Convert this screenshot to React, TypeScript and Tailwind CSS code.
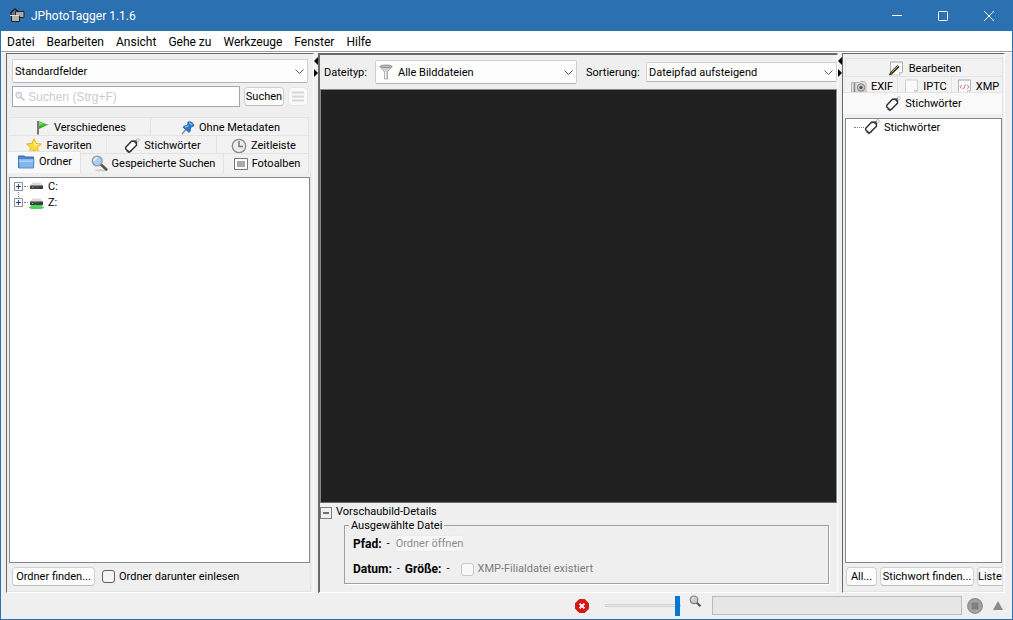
import type { ReactNode } from "react";

/* ---------- Icons ---------- */

const AppIcon = () => (
  <svg width="16" height="16" viewBox="0 0 16 16" aria-hidden="true">
    <path d="M2 7V4.500L6 1l4 3" fill="#777" stroke="#111" strokeWidth="1.200" />
    <path d="M6.500 3.500h8.500v6H6.500z" fill="#aaa" stroke="#222" strokeWidth="1" />
    <path d="M2.500 7.500h8v6h-8z" fill="#b4b4ae" stroke="#222" strokeWidth="1" />
    <path d="M1 7.500h9.500" stroke="#ddd" />
  </svg>
);

const Chevron = () => (
  <svg width="9" height="5" viewBox="0 0 9 5" aria-hidden="true">
    <path d="M.5.5l4 4 4-4" fill="none" stroke="#555" strokeWidth="1" />
  </svg>
);

const SmallSearch = () => (
  <svg width="11" height="11" viewBox="0 0 11 11" aria-hidden="true">
    <circle cx="4" cy="4" r="3" fill="#e6eef8" stroke="#c2c9d4" strokeWidth="1.3" />
    <path d="M6.4 6.4l3.6 3.4" stroke="#cfcfcf" strokeWidth="2" />
  </svg>
);

const FlagIcon = () => (
  <svg width="14" height="15" viewBox="0 0 14 15" aria-hidden="true">
    <path d="M2 1v13.500" stroke="#333" strokeWidth="1.300" />
    <path d="M3 1.500c3 .3 5 2.500 10 3.300C9 5.500 6 8.300 3 9z" fill="#35b02b" />
    <path d="M3 2c2 .3 3 1.200 5 2L3 6z" fill="#7ed36b" />
  </svg>
);

const PinIcon = () => (
  <svg width="14" height="14" viewBox="0 0 14 14" aria-hidden="true">
    <path d="M1 13l4-4.500" stroke="#8a9099" strokeWidth="1.400" />
    <path d="M2 6.200c1-1.600 2.600-1.600 4-1.800l.8-1.800C6.300 1.500 7 .4 8.600.7c1.800.2 3.700 1.600 4.200 3.100.2 1.400-.8 1.900-1.800 1.800L9.500 7.200c.2 1.600 0 3-1.400 4.300z" fill="#2b78c9" stroke="#1d569c" strokeWidth=".7" />
    <path d="M8.200 1.800l3 2.200M4 6.200c1.500-.4 2.600-.7 3.500-1.800" stroke="#8fc3f3" strokeWidth="1.200" fill="none" />
  </svg>
);

const StarIcon = () => (
  <svg width="16" height="16" viewBox="0 0 16 16" aria-hidden="true">
    <path d="M8 .7l2.200 4.700 5.200.6-3.900 3.500 1.100 5.200L8 12.100l-4.600 2.600 1.100-5.200L.6 6l5.200-.6z" fill="#fddc35" stroke="#dca51b" strokeWidth=".8" />
    <path d="M8 2.400l1.500 3.700 3.700.5L8 8.300z" fill="#fff3a0" />
  </svg>
);

const TagIcon = () => (
  <svg width="16" height="16" viewBox="0 0 16 16" aria-hidden="true">
    <path d="M2 9L7.500 3.300 12.400 3 12.500 7.200l-5.800 5.900c-.8.8-1.800.8-2.600 0L2 11.200c-.6-.7-.6-1.500 0-2.200z" fill="#fff" stroke="#2b2b2b" strokeWidth="1.400" />
    <path d="M2.500 12.500l2.300 2 2.500-1.500" fill="none" stroke="#444" strokeWidth="1.300" />
    <path d="M9 3.300l3.400-.3.100 3.500z" fill="#444" />
    <circle cx="13.700" cy="2.200" r="1.600" fill="none" stroke="#b5b5b5" strokeWidth=".9" />
  </svg>
);

const ClockIcon = () => (
  <svg width="16" height="16" viewBox="0 0 16 16" aria-hidden="true">
    <circle cx="8" cy="8" r="6.700" fill="#ededed" stroke="#8a8a8a" strokeWidth="1.300" />
    <path d="M8 3v5.500h4" fill="none" stroke="#777" strokeWidth="1.500" />
  </svg>
);

const FolderIcon = () => (
  <svg width="17" height="14" viewBox="0 0 17 14" aria-hidden="true">
    <path d="M.5 12.500V1h6l1 1h8v10.500z" fill="#5089cf" stroke="#3569ad" />
    <path d="M.5 4h15.500l-.5 9H1z" fill="#83b5ec" stroke="#457fc7" strokeWidth=".8" />
    <path d="M1 5h14.500M1.500 6.500h13.500" stroke="#b4d6f8" strokeWidth=".9" />
  </svg>
);

const LensIcon = () => (
  <svg width="17" height="17" viewBox="0 0 17 17" aria-hidden="true">
    <ellipse cx="10" cy="15.300" rx="6" ry="1.200" fill="#d2d2d2" />
    <path d="M10 9.500l5.300 5" stroke="#555" strokeWidth="2.600" strokeLinecap="round" />
    <circle cx="6.200" cy="6" r="4.900" fill="#a9cdf2" stroke="#96999e" strokeWidth="1.400" />
    <path d="M3 6c.3-2 1.600-3 3.300-3.200" stroke="#f2f9ff" strokeWidth="1.500" fill="none" />
  </svg>
);

const AlbumIcon = () => (
  <svg width="14" height="12" viewBox="0 0 14 12" aria-hidden="true">
    <path d="M.5.5h13v11H.5z" fill="#fbfbfb" stroke="#777" />
    <path d="M3 3h8v6H3z" fill="#a8a8a8" />
  </svg>
);

const DriveIcon = ({ network = false }: { network?: boolean }) => (
  <svg width="15" height="14" viewBox="0 0 15 14" aria-hidden="true">
    <path d="M3.500 3.500h8l2.500 3.500H1z" fill="#dadada" />
    <path d="M1 6.500h13V10H1z" fill="#3c3c3c" />
    <path d="M2 8h8" stroke="#6c6c6c" strokeWidth=".7" />
    <path d="M3 8h1v1H3z" fill="#55e15a" />
    {network && (
      <>
        <path d="M0 12.500h15" stroke="#9a9a9a" />
        <path d="M1.500 10h12v4h-12z" fill="#48d862" />
      </>
    )}
  </svg>
);

const PlusBox = ({ first }: { first: boolean }) => (
  <svg width="9" height="16" viewBox="0 0 9 16" aria-hidden="true">
    <path d="M.5 4.500h8v8h-8z" fill="#f7f7f7" stroke="#919191" />
    <path d="M2 8.500h5M4.500 6v5" stroke="#2a4a9c" />
    <path d={first ? "M4 14h1v1h-1z" : "M4 0h1v1h-1zM4 2h1v1h-1z"} fill="#808080" />
  </svg>
);

const FunnelIcon = () => (
  <svg width="14" height="16" viewBox="0 0 14 16" aria-hidden="true">
    <path d="M1 2.500l4.500 5.500v7h3V8L13 2.500z" fill="#d3d3d3" stroke="#999" strokeWidth=".8" />
    <path d="M6.500 8v6.500" stroke="#f8f8f8" strokeWidth="1.200" />
    <ellipse cx="7" cy="2.300" rx="6" ry="1.300" fill="#bbb" stroke="#777" strokeWidth=".7" />
  </svg>
);

const PageShape = () => (
  <>
    <path d="M1.500 1h12v10.500L10.500 14h-9z" fill="#fafafa" stroke="#d0d0d0" />
    <path d="M10.500 14v-2.500h3" fill="none" stroke="#bbb" strokeWidth=".8" />
  </>
);

const EditIcon = () => (
  <svg width="16" height="15" viewBox="0 0 16 15" aria-hidden="true">
    <PageShape />
    <path d="M1.500 12V1h12v10" fill="none" stroke="#b0b0b0" />
    <path d="M2 12.500L9.500 5" stroke="#3a3220" strokeWidth="2.800" />
    <path d="M2.500 11.500L9 5" stroke="#c9ad63" strokeWidth="1" />
    <path d="M0 14.500l1-3 2 2z" fill="#222" />
  </svg>
);

const PageIcon = () => (
  <svg width="15" height="15" viewBox="0 0 15 15" aria-hidden="true">
    <PageShape />
  </svg>
);

const XmlIcon = () => (
  <svg width="15" height="15" viewBox="0 0 15 15" aria-hidden="true">
    <PageShape />
    <path d="M1.500 12V1h12v10.500" fill="none" stroke="#b5b5b5" />
    <path d="M4.800 6L3 7.800 4.800 9.600M10.200 6L12 7.800 10.200 9.600M8.400 5.500L6.600 10" fill="none" stroke="#e0527a" strokeWidth=".9" />
  </svg>
);

const CameraIcon = () => (
  <svg width="16" height="12" viewBox="0 0 16 12" aria-hidden="true">
    <path d="M.5 1.500h8l1-1h4l1.500 1.500v9H.5z" fill="#dedede" stroke="#b5b5b5" />
    <path d="M3.500 2v9" stroke="#888" strokeWidth="1.500" />
    <circle cx="10" cy="6.500" r="3.700" fill="#ccc" stroke="#808080" />
    <circle cx="10" cy="6.500" r="1.700" fill="#555" />
  </svg>
);

const ErrorIcon = () => (
  <svg width="14" height="14" viewBox="0 0 14 14" aria-hidden="true">
    <path d="M4.200.5h5.600l3.700 3.700v5.600l-3.700 3.700H4.200L.5 9.800V4.200z" fill="#dc1414" stroke="#b80d0d" strokeWidth=".8" />
    <path d="M4.600 4.600l4.800 4.800M9.400 4.600L4.600 9.400" stroke="#fff" strokeWidth="2" />
  </svg>
);

const GreyLens = () => (
  <svg width="13" height="13" viewBox="0 0 13 13" aria-hidden="true">
    <path d="M7.500 7.500l4 3.800" stroke="#555" strokeWidth="2.200" />
    <circle cx="5" cy="4.800" r="3.800" fill="#ccc" stroke="#808080" strokeWidth="1.200" />
    <path d="M3 4.500C3.200 3.300 4 2.800 5 2.700" fill="none" stroke="#fff" />
  </svg>
);

const StopIcon = () => (
  <svg width="16" height="16" viewBox="0 0 16 16" aria-hidden="true">
    <circle cx="8" cy="8" r="7.300" fill="#a3a3a3" stroke="#8b8b8b" strokeWidth="1.200" />
    <path d="M5 5h6v6H5z" fill="#828282" stroke="#767676" strokeWidth=".6" />
  </svg>
);

/* ---------- Building blocks ---------- */

const Select = ({ label, value, icon, className }: { label: string; value: string; icon?: ReactNode; className: string }) => (
  <span className={`grid items-center ${className}`}>
    <select
      aria-label={label}
      className={`col-start-1 row-start-1 h-full w-full appearance-none rounded-[2px] border border-[#d0d0d0] border-b-[#b4b4b4] bg-[#fdfdfd] pt-px pr-5 ${icon ? "pl-[22px]" : "pl-[2px]"}`}
    >
      <option>{value}</option>
    </select>
    {icon && <span className="pointer-events-none col-start-1 row-start-1 justify-self-start pl-1">{icon}</span>}
    <span className="pointer-events-none col-start-1 row-start-1 justify-self-end pr-1">
      <Chevron />
    </span>
  </span>
);

const PushButton = ({ children, className = "" }: { children: ReactNode; className?: string }) => (
  <button
    type="button"
    className={`flex h-[19px] shrink-0 items-center justify-center rounded-[4px] border border-[#d0d0d0] border-b-[#bcbcbc] bg-[#fdfdfd] whitespace-nowrap ${className}`}
  >
    {children}
  </button>
);

const Tab = ({ icon, label, className = "", selected = false }: { icon: ReactNode; label: string; className?: string; selected?: boolean }) => (
  <button
    type="button"
    role="tab"
    aria-selected={selected}
    className={`flex items-center justify-center gap-1 overflow-hidden border-t border-r border-[#e3e3e3] pl-[2px] whitespace-nowrap ${selected ? "bg-[#f9f9f9]" : "bg-[#f2f2f2]"} ${className}`}
  >
    <span className="shrink-0">{icon}</span>
    <span className="pt-px">{label}</span>
  </button>
);

const Divider = () => (
  <div className="flex w-1 shrink-0 flex-col items-center gap-1 bg-[#f0f0f0] pt-1">
    <svg width="4" height="8" viewBox="0 0 4 8" aria-hidden="true">
      <path d="M4 0v8L0 4z" fill="#000" />
    </svg>
    <svg width="4" height="8" viewBox="0 0 4 8" aria-hidden="true">
      <path d="M0 0v8l4-4z" fill="#000" />
    </svg>
  </div>
);

const menus = ["Datei", "Bearbeiten", "Ansicht", "Gehe zu", "Werkzeuge", "Fenster", "Hilfe"];

/* ---------- Panels ---------- */

const TitleBar = () => (
  <header className="flex h-[31px] items-center bg-[#2b70b1] pl-2 text-white">
    <AppIcon />
    <h1 className="flex-1 pl-[6px] text-[12px]">JPhotoTagger 1.1.6</h1>
    <button type="button" aria-label="Minimieren" className="flex h-full w-[46px] items-center justify-center">
      <svg width="10" height="10" viewBox="0 0 10 10"><path d="M0 4.500h10" stroke="#fff" /></svg>
    </button>
    <button type="button" aria-label="Maximieren" className="flex h-full w-[46px] items-center justify-center">
      <svg width="10" height="10" viewBox="0 0 10 10"><rect x=".5" y=".5" width="9" height="9" rx=".8" fill="none" stroke="#fff" /></svg>
    </button>
    <button type="button" aria-label="Schließen" className="flex h-full w-[46px] items-center justify-center">
      <svg width="10" height="10" viewBox="0 0 10 10"><path d="M0 0l10 10M10 0L0 10" stroke="#fff" /></svg>
    </button>
  </header>
);

const TreeDrive = ({ name, network = false }: { name: string; network?: boolean }) => (
  <li className="flex h-4 items-center">
    <PlusBox first={!network} />
    <span className="ml-px w-1 border-t border-dotted border-[#808080]" />
    <span className="mr-1 ml-px"><DriveIcon network={network} /></span>
    <span className="pt-px">{name}</span>
  </li>
);

const LeftPanel = () => (
  <section className="flex w-[308px] shrink-0 flex-col border border-t-[#696969] border-r-white border-b-white border-l-[#696969]">
    <div className="flex flex-col gap-[3px] px-[5px] pt-[5px]">
      <Select label="Suchfelder" value="Standardfelder" className="h-6" />
      <div className="flex items-center">
        <label className="flex h-[21px] flex-1 items-center gap-[3px] border border-[#a3a6ab] bg-white px-[2px]">
          <SmallSearch />
          <input
            type="text"
            aria-label="Suchen"
            placeholder="Suchen (Strg+F)"
            className="w-full min-w-0 bg-transparent font-['Liberation_Sans',sans-serif] text-[12px] outline-none placeholder:text-[#cbcbcb]"
          />
        </label>
        <PushButton className="mx-1 w-10">Suchen</PushButton>
        <button type="button" aria-label="Menü" className="flex h-[19px] w-5 items-center justify-center rounded-[4px] border border-[#e6e6e6] bg-[#fafafa]">
          <svg width="12" height="11" viewBox="0 0 12 11"><path d="M0 1.500h12M0 5.500h12M0 9.500h12" stroke="#d6d6d6" strokeWidth="2" /></svg>
        </button>
      </div>
    </div>

    <div role="tablist" className="flex flex-col pt-[10px] pl-px">
      <div className="flex h-[18px] pr-1 pl-[2px]">
        <Tab className="w-[141px] pt-[2px]" icon={<FlagIcon />} label="Verschiedenes" />
        <Tab className="flex-1 pt-[2px]" icon={<PinIcon />} label="Ohne Metadaten" />
      </div>
      <div className="flex h-[18px] items-stretch pr-1 pl-[2px]">
        <Tab className="w-[97px] pt-[2px]" icon={<StarIcon />} label="Favoriten" />
        <Tab className="w-[110px] pt-[2px]" icon={<TagIcon />} label="Stichwörter" />
        <Tab className="flex-1 pt-[2px]" icon={<ClockIcon />} label="Zeitleiste" />
      </div>
      <div className="flex h-5 items-end pr-1">
        <Tab selected className="-mt-[2px] h-[22px] w-[73px] pb-[2px]" icon={<FolderIcon />} label="Ordner" />
        <Tab className="h-5 w-[143px]" icon={<LensIcon />} label="Gespeicherte Suchen" />
        <Tab className="h-5 flex-1" icon={<AlbumIcon />} label="Fotoalben" />
      </div>
    </div>

    <div className="mr-[2px] ml-[1px] flex flex-1 flex-col border-r border-b border-[#e3e3e3]">
      <ul className="mt-1 ml-px flex-1 border border-[#828790] bg-white pl-1">
        <TreeDrive name="C:" />
        <TreeDrive name="Z:" network />
      </ul>
      <div className="flex h-7 items-center pb-px pl-1">
        <PushButton className="w-[83px]">Ordner finden...</PushButton>
        <label className="ml-[7px] flex items-center gap-1">
          <input type="checkbox" className="size-[13px] appearance-none rounded-[3px] border border-[#606060] bg-[#f5f5f5]" />
          Ordner darunter einlesen
        </label>
      </div>
    </div>
  </section>
);

const CenterPanel = () => (
  <section className="flex min-w-0 flex-1 flex-col border-t-2 border-r border-b border-l-2 border-t-[#696969] border-r-white border-b-white border-l-[#696969]">
    <div className="flex h-[34px] items-center pl-1">
      <span className="w-[51px] pt-px whitespace-nowrap">Dateityp:</span>
      <Select label="Dateityp" value="Alle Bilddateien" icon={<FunnelIcon />} className="h-6 w-[202px]" />
      <span className="w-[69px] pt-px pl-[9px] whitespace-nowrap">Sortierung:</span>
      <Select label="Sortierung" value="Dateipfad aufsteigend" className="h-5 flex-1" />
    </div>
    <div className="flex-1 border border-[#828790] border-b-[#696969] bg-[#202020]" />
    <div className="flex h-[89px] flex-col">
      <div className="flex h-4 items-center gap-1 whitespace-nowrap">
        <button type="button" aria-label="Details ausblenden" className="mt-1 flex size-3 items-center justify-center border border-[#808080]">
          <svg width="6" height="2" viewBox="0 0 6 2"><path d="M0 1h6" stroke="#444" strokeWidth="1.500" /></svg>
        </button>
        <span className="pt-px">Vorschaubild-Details</span>
      </div>
      <fieldset className="mr-2 ml-6 border border-[#a0a0a0] px-2 pb-[2px] shadow-[1px_1px_0_#fff]">
        <legend className="-ml-1 h-3 px-[2px] leading-[13px]">Ausgewählte Datei</legend>
        <div className="flex h-6 items-center gap-[5px] pt-px">
          <b className="text-[12px]">Pfad:</b>
          <span>-</span>
          <button type="button" disabled className="h-[17px] rounded-[3px] border border-[#ebebeb] bg-[#f7f7f7] whitespace-nowrap text-[#8a8a8a]">
            Ordner öffnen
          </button>
        </div>
        <div className="flex h-[26px] items-center gap-[5px] pt-[2px] whitespace-nowrap">
          <b className="text-[12px]">Datum:</b>
          <span>-</span>
          <b className="text-[12px]">Größe:</b>
          <span>-</span>
          <label className="ml-[6px] flex items-center gap-1 text-[#7c7c7c]">
            <input type="checkbox" disabled className="size-[13px] appearance-none rounded-[3px] border border-[#c8c8c8] bg-[#f8f8f8]" />
            XMP-Filialdatei existiert
          </label>
        </div>
      </fieldset>
    </div>
  </section>
);

const RightPanel = () => (
  <section className="flex w-[163px] shrink-0 flex-col border border-t-[#696969] border-r-white border-b-white border-l-[#696969] pr-px">
    <div role="tablist" className="flex flex-col pt-1">
      <div className="flex h-[18px] pl-[2px]">
        <Tab className="flex-1 border-l pt-[2px]" icon={<EditIcon />} label="Bearbeiten" />
      </div>
      <div className="flex h-4 pl-[2px]">
        <Tab className="w-[53px] pt-[4px]" icon={<CameraIcon />} label="EXIF" />
        <Tab className="w-[54px] pt-[4px]" icon={<PageIcon />} label="IPTC" />
        <Tab className="flex-1 pt-[4px]" icon={<XmlIcon />} label="XMP" />
      </div>
      <Tab selected className="h-[22px]" icon={<TagIcon />} label="Stichwörter" />
    </div>
    <div className="flex flex-1 flex-col border-r border-b border-[#e3e3e3]">
      <ul className="mt-1 ml-[2px] flex-1 border border-[#828790] bg-white pl-2">
        <li className="flex h-4 items-center gap-1">
          <span className="w-[10px] border-t border-dotted border-[#808080]" />
          <span className="-ml-1"><TagIcon /></span>
          <span className="pt-px">Stichwörter</span>
        </li>
      </ul>
      <div className="flex h-7 items-center gap-[3px] pb-px pl-[3px]">
        <PushButton className="w-[31px]">All...</PushButton>
        <PushButton className="w-[94px]">Stichwort finden...</PushButton>
        <PushButton className="rounded-r-none border-r-0">Liste</PushButton>
      </div>
    </div>
  </section>
);

const StatusBar = () => (
  <footer className="flex h-[26px] items-center justify-end pr-[9px] pb-px">
    <button type="button" aria-label="Fehler anzeigen"><ErrorIcon /></button>
    <input
      type="range"
      aria-label="Vorschaubildgröße"
      min={0}
      max={100}
      defaultValue={100}
      className="ml-4 h-5 w-[76px] appearance-none bg-transparent [&::-webkit-slider-runnable-track]:h-[3px] [&::-webkit-slider-runnable-track]:border [&::-webkit-slider-runnable-track]:border-[#d3d3d3] [&::-webkit-slider-runnable-track]:bg-[#e7e7e7] [&::-webkit-slider-thumb]:-mt-[9px] [&::-webkit-slider-thumb]:h-5 [&::-webkit-slider-thumb]:w-[5px] [&::-webkit-slider-thumb]:appearance-none [&::-webkit-slider-thumb]:bg-[#0078d7]"
    />
    <span className="mr-[10px] ml-2 pb-2"><GreyLens /></span>
    <div role="progressbar" aria-label="Fortschritt" className="h-[19px] w-[250px] border border-[#bcbcbc] bg-[#e6e6e6]" />
    <button type="button" aria-label="Abbrechen" className="ml-[5px]"><StopIcon /></button>
    <button type="button" aria-label="Aufklappen" className="ml-[10px]">
      <svg width="10" height="9" viewBox="0 0 10 9"><path d="M5 0l5 9H0z" fill="#8b8b8b" /></svg>
    </button>
  </footer>
);

export default function App() {
  return (
    <div className="flex min-h-screen flex-col border-r border-b border-l border-[#2b70b1] bg-[#efefef] font-['Roboto',sans-serif] text-[11px] leading-[14px] text-black">
      <TitleBar />
      <nav className="flex h-[21px] items-center gap-3 border-b border-[#a0a0a0] bg-white pt-[2px] pl-[6px] text-[12px]">
        {menus.map((menu) => (
          <button key={menu} type="button" className="whitespace-nowrap">{menu}</button>
        ))}
      </nav>
      <main className="flex flex-1 border-t border-white pr-[7px] pl-[5px]">
        <LeftPanel />
        <Divider />
        <CenterPanel />
        <Divider />
        <RightPanel />
      </main>
      <StatusBar />
    </div>
  );
}
